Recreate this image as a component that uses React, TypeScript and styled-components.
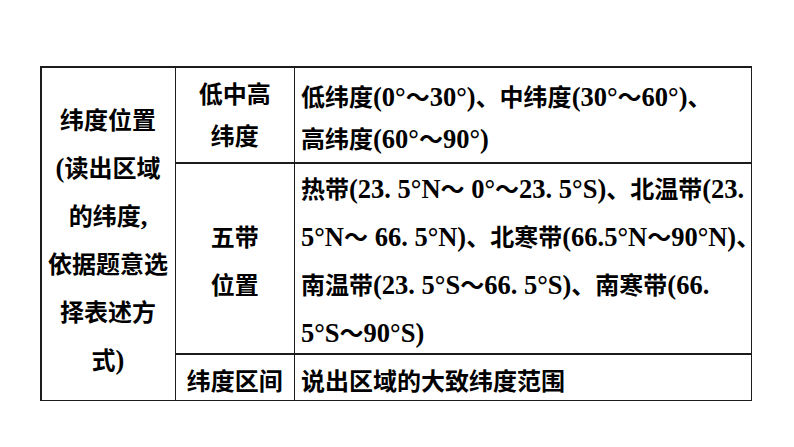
import React from 'react';
import styled, { createGlobalStyle } from 'styled-components';

const GlobalStyle = createGlobalStyle`
  html, body {
    margin: 0;
    padding: 0;
    background: #fff;
  }
  body {
    font-family: "Liberation Serif", "Noto Sans CJK SC", serif;
    font-weight: 700;
    color: #000;
  }
`;

const Page = styled.div`
  width: 794px;
  height: 447px;
  padding: 66px 0 0 40px;
  box-sizing: border-box;
`;

const Grid = styled.div`
  display: grid;
  width: max-content;
  grid-template-columns: 133px 117.5px 455.5px;
  grid-template-rows: 94.5px 189.5px 45px;
  gap: 1.5px;
  padding: 1.5px;
  background: #1c1c1c;
`;

const Cell = styled.div<{ $align?: 'left' | 'center'; $lh?: number; $span?: number; $shift?: number }>`
  background: #fff;
  display: flex;
  flex-direction: column;
  justify-content: center;
  align-items: ${p => (p.$align === 'left' ? 'flex-start' : 'center')};
  text-align: ${p => p.$align ?? 'center'};
  padding: ${p => (p.$align === 'left' ? '0 0 0 6px' : '0')};
  padding-top: ${p => p.$shift ?? 0}px;
  font-size: 24px;
  line-height: ${p => p.$lh ?? 48}px;
  white-space: nowrap;
  overflow: visible;
  grid-row: ${p => (p.$span ? `span ${p.$span}` : 'auto')};
`;

const Line = styled.span`
  display: block;
`;

// Latin runs (digits, brackets, degree marks) are set larger, like the Times text in the slide
const Latin = styled.span`
  font-size: 26.5px;
  line-height: 1;
`;

function Mixed({ text }: { text: string }) {
  const parts = text.split(/([\u0000-\u00ff]+)/).filter(Boolean);
  return (
    <Line>
      {parts.map((p, i) => (/^[\u0000-\u00ff]+$/.test(p) ? <Latin key={i}>{p}</Latin> : p))}
    </Line>
  );
}

const LEFT = ['纬度位置', '(读出区域', '的纬度,', '依据题意选', '择表述方', '式)'];

const BELTS = [
  '热带(23. 5°N～ 0°～23. 5°S)、北温带(23.',
  '5°N～ 66. 5°N)、北寒带(66.5°N～90°N)、',
  '南温带(23. 5°S～66. 5°S)、南寒带(66.',
  '5°S～90°S)',
];

export default function App() {
  return (
    <Page>
      <GlobalStyle />
      <Grid>
        <Cell $span={3} $shift={14}>
          {LEFT.map(t => (
            <Mixed key={t} text={t} />
          ))}
        </Cell>
        <Cell $lh={42} $shift={2}>
          <Line>低中高</Line>
          <Line>纬度</Line>
        </Cell>
        <Cell $align="left" $lh={42} $shift={8}>
          <Mixed text="低纬度(0°～30°)、中纬度(30°～60°)、" />
          <Mixed text="高纬度(60°～90°)" />
        </Cell>
        <Cell $shift={8}>
          <Line>五带</Line>
          <Line>位置</Line>
        </Cell>
        <Cell $align="left" $shift={8}>
          {BELTS.map(t => (
            <Mixed key={t} text={t} />
          ))}
        </Cell>
        <Cell $shift={9}>纬度区间</Cell>
        <Cell $align="left" $shift={9}>
          说出区域的大致纬度范围
        </Cell>
      </Grid>
    </Page>
  );
}
